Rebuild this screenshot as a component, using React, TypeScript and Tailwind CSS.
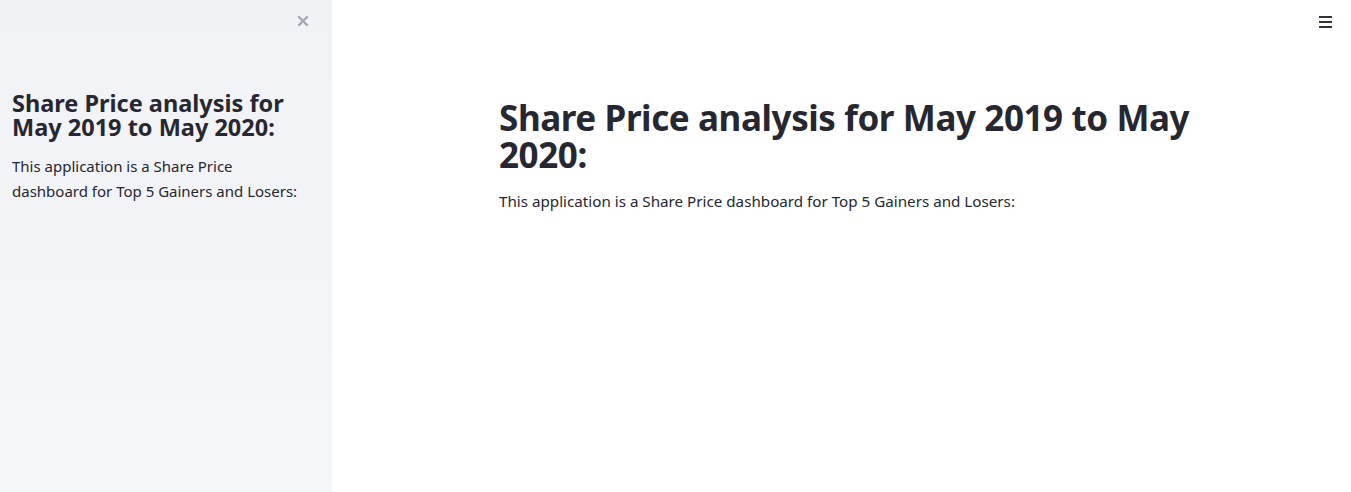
import React from "react";

export default function App() {
  const font = { fontFamily: '"Noto Sans", "Open Sans", sans-serif' };
  return (
    <div className="flex h-[492px] w-[1351px] overflow-hidden bg-white text-[#262730]" style={font}>
      <aside className="relative w-[332px] shrink-0 bg-gradient-to-b from-[#f1f2f6] to-[#f5f6f9] pl-3 pr-[30px] pt-[91px]">
        <button className="absolute left-[296px] top-[14px] flex h-[14px] w-[14px] items-center justify-center text-[#a3a8b4]">
          <svg width="12" height="12" viewBox="0 0 12 12" fill="none" stroke="currentColor" strokeWidth="2.4" strokeLinecap="round">
            <path d="M2 2 L10 10 M10 2 L2 10" />
          </svg>
        </button>
        <h2 className="m-0 text-[23.5px] font-bold leading-[24px]">
          Share Price analysis for May 2019 to May 2020:
        </h2>
        <p className="mt-[15px] text-[15px] leading-[25px]">
          This application is a Share Price dashboard for Top 5 Gainers and Losers:
        </p>
      </aside>
      <main className="relative flex-1 pl-[167px] pt-[99px]">
        <button className="absolute right-[18px] top-[15px] flex h-[14px] w-[14px] flex-col justify-between py-[1px]">
          <span className="block h-[2px] w-[13px] bg-[#31333f]" />
          <span className="block h-[2px] w-[13px] bg-[#31333f]" />
          <span className="block h-[2px] w-[13px] bg-[#31333f]" />
        </button>
        <div className="w-[700px]">
          <h1 className="m-0 text-[35px] font-bold leading-[37px] tracking-[-0.4px]">
            Share Price analysis for May 2019 to May 2020:
          </h1>
          <p className="mt-[16px] text-[15.2px] leading-[25px]">
            This application is a Share Price dashboard for Top 5 Gainers and Losers:
          </p>
        </div>
      </main>
    </div>
  );
}
